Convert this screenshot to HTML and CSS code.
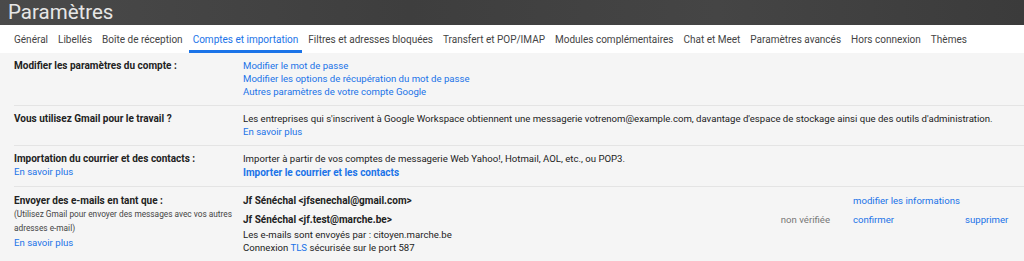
FILE: index.html
```html
<!DOCTYPE html>
<html lang="fr">
<head>
<meta charset="utf-8">
<title>Paramètres</title>
<link rel="stylesheet" href="styles.css">
</head>
<body>
<header class="top">
  <h1 class="title">Paramètres</h1>
</header>
<nav class="tabs">
  <a class="tab">Général</a>
  <a class="tab">Libellés</a>
  <a class="tab">Boîte de réception</a>
  <a class="tab active">Comptes et importation</a>
  <a class="tab">Filtres et adresses bloquées</a>
  <a class="tab">Transfert et POP/IMAP</a>
  <a class="tab">Modules complémentaires</a>
  <a class="tab">Chat et Meet</a>
  <a class="tab">Paramètres avancés</a>
  <a class="tab">Hors connexion</a>
  <a class="tab">Thèmes</a>
</nav>
<main class="content">
  <section class="row">
    <div class="label"><b>Modifier les paramètres du compte :</b></div>
    <div class="value">
      <a class="link">Modifier le mot de passe</a>
      <a class="link">Modifier les options de récupération du mot de passe</a>
      <a class="link">Autres paramètres de votre compte Google</a>
    </div>
  </section>
  <section class="row">
    <div class="label"><b>Vous utilisez Gmail pour le travail ?</b></div>
    <div class="value">
      <span>Les entreprises qui s'inscrivent à Google Workspace obtiennent une messagerie votrenom@example.com, davantage d'espace de stockage ainsi que des outils d'administration.</span>
      <a class="link">En savoir plus</a>
    </div>
  </section>
  <section class="row">
    <div class="label"><b>Importation du courrier et des contacts :</b><a class="link">En savoir plus</a></div>
    <div class="value">
      <span>Importer à partir de vos comptes de messagerie Web Yahoo!, Hotmail, AOL, etc., ou POP3.</span>
      <a class="link strong">Importer le courrier et les contacts</a>
    </div>
  </section>
  <section class="row last">
    <div class="label">
      <b>Envoyer des e-mails en tant que :</b>
      <span class="small">(Utilisez Gmail pour envoyer des messages avec vos autres adresses e-mail)</span>
      <a class="link more">En savoir plus</a>
    </div>
    <div class="value">
      <div class="account">
        <div class="ident"><b>Jf Sénéchal &lt;jfsenechal@gmail.com&gt;</b></div>
        <div class="status"></div>
        <a class="link">modifier les informations</a>
        <div></div>
      </div>
      <div class="account second">
        <div class="ident">
          <b>Jf Sénéchal &lt;jf.test@marche.be&gt;</b>
          <span class="sender">Les e-mails sont envoyés par : citoyen.marche.be</span>
          <span>Connexion <a class="link inline">TLS</a> sécurisée sur le port 587</span>
        </div>
        <div class="status">non vérifiée</div>
        <a class="link">confirmer</a>
        <a class="link">supprimer</a>
      </div>
    </div>
  </section>
</main>
</body>
</html>
```
FILE: styles.css
```css
* { box-sizing: border-box; }
html, body { margin: 0; padding: 0; }
body {
  width: 1024px;
  height: 261px;
  overflow: hidden;
  background: #f5f5f5;
  font-family: Roboto, "Liberation Sans", Arial, sans-serif;
  font-size: 9.6px;
  color: #222;
}
.top {
  height: 25px;
  background: linear-gradient(90deg, #4a4a4a 0%, #3e3e3e 40%, #454545 70%, #3b3b3b 100%);
  display: flex;
  align-items: center;
  padding-left: 8px;
}
.title {
  margin: 0;
  font-weight: 400;
  font-size: 20.5px;
  line-height: 25px;
  color: #e6e6e6;
}
.tabs {
  height: 28px;
  background: #fff;
  display: flex;
  align-items: stretch;
  padding-left: 14px;
  gap: 10px;
}
.tab {
  display: flex;
  align-items: center;
  color: #444;
  font-size: 10px;
  border-bottom: 3px solid transparent;
  padding: 3px 0 0;
  white-space: nowrap;
}
.tab.active {
  color: #1a73e8;
  border-bottom-color: #1a73e8;
  padding: 3px 4px 0;
  margin: 0 -4px;
}
.content {
  padding-left: 14px;
}
.row {
  display: grid;
  grid-template-columns: 229px 1fr;
  padding: 6px 0 7px;
  border-bottom: 1px solid #e4e4e4;
  line-height: 13px;
}
.row.last { border-bottom: none; padding-top: 7px; }
.label, .value, .ident {
  display: flex;
  flex-direction: column;
}
.label b, .ident b { font-weight: 700; color: #222; font-size: 10px; }
.link {
  color: #1a73e8;
  text-decoration: none;
}
.link.strong { font-weight: 700; font-size: 10px; margin-top: 1px; }
.link.inline { display: inline; }
.link.more { margin-top: 1px; }
.small {
  font-size: 8.3px;
  color: #444;
  line-height: 13.5px;
  margin-top: 1px;
}
.account {
  display: grid;
  grid-template-columns: 497px 113px 112px 1fr;
  white-space: nowrap;
}
.account.second { margin-top: 6px; }
.sender { margin-top: 2px; }
.status {
  color: #777;
  text-align: right;
  padding-right: 23px;
}
```
